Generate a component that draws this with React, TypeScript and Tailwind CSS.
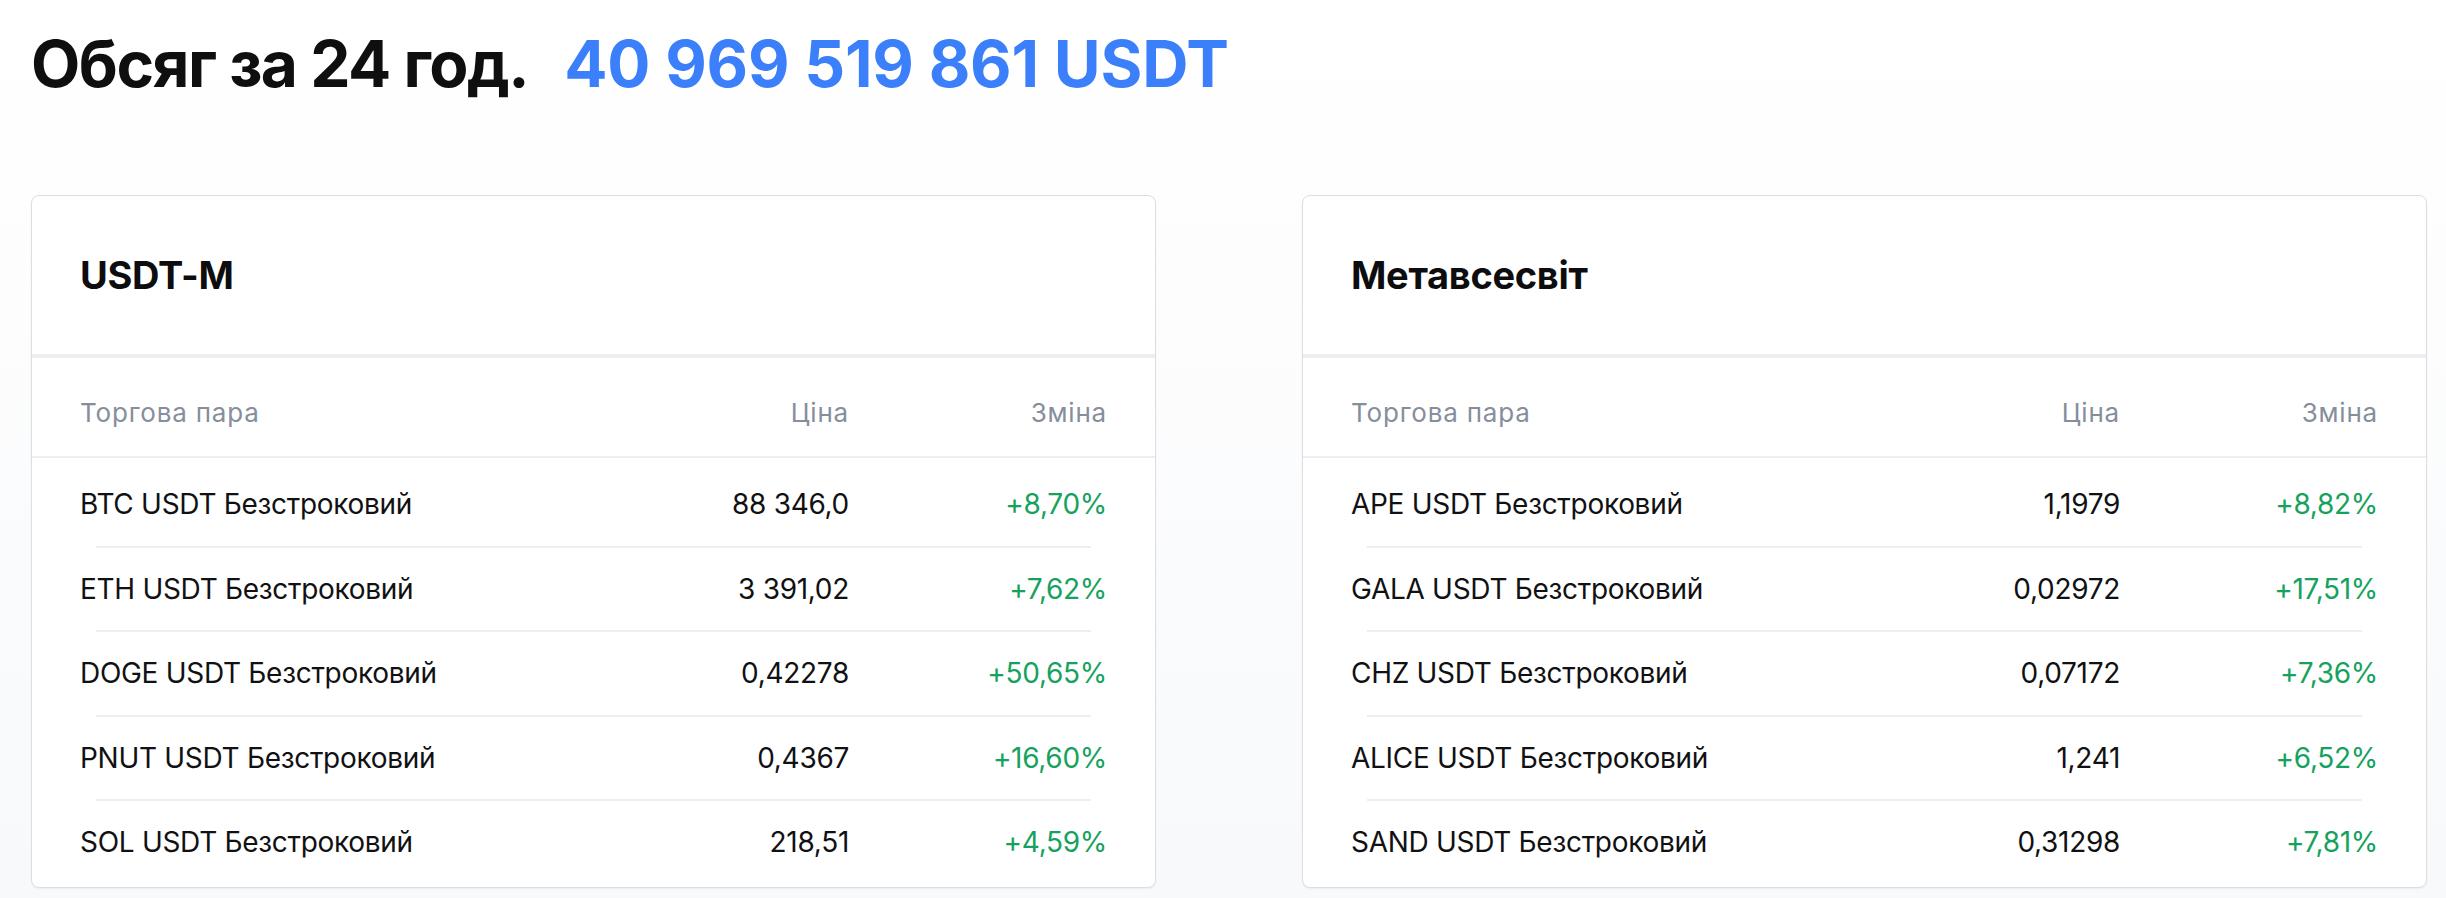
import React from "react";

type Row = { pair: string; price: string; change: string };

const usdtM: Row[] = [
  { pair: "BTC USDT Безстроковий", price: "88 346,0", change: "+8,70%" },
  { pair: "ETH USDT Безстроковий", price: "3 391,02", change: "+7,62%" },
  { pair: "DOGE USDT Безстроковий", price: "0,42278", change: "+50,65%" },
  { pair: "PNUT USDT Безстроковий", price: "0,4367", change: "+16,60%" },
  { pair: "SOL USDT Безстроковий", price: "218,51", change: "+4,59%" },
];

const metaverse: Row[] = [
  { pair: "APE USDT Безстроковий", price: "1,1979", change: "+8,82%" },
  { pair: "GALA USDT Безстроковий", price: "0,02972", change: "+17,51%" },
  { pair: "CHZ USDT Безстроковий", price: "0,07172", change: "+7,36%" },
  { pair: "ALICE USDT Безстроковий", price: "1,241", change: "+6,52%" },
  { pair: "SAND USDT Безстроковий", price: "0,31298", change: "+7,81%" },
];

function MarketCard({ title, rows }: { title: string; rows: Row[] }) {
  return (
    <div className="rounded-lg border border-[#dcdee3] bg-white shadow-[0_1px_2px_rgba(0,0,0,0.05)] overflow-hidden">
      <div className="h-[158px] flex items-center px-12">
        <h2 className="text-[38px] leading-none font-bold text-[#0d0d0f] tracking-[-0.3px]">
          {title}
        </h2>
      </div>
      <div className="h-1 bg-[#eceef1]" />
      <div className="h-[100px] pt-[10px] grid grid-cols-[1fr_200px_258px] items-center px-12 text-[26px] tracking-[0.8px] text-[#868e9c] border-b-2 border-[#eceef1]">
        <span>Торгова пара</span>
        <span className="text-right">Ціна</span>
        <span className="text-right">Зміна</span>
      </div>
      <div className="px-12 pt-[5px] pb-[3px]">
        {rows.map((row, i) => (
          <div key={row.pair}>
            <div className="h-[82.5px] grid grid-cols-[1fr_200px_258px] items-center text-[28px] tracking-[-0.3px] text-[#111113]">
              <span>{row.pair}</span>
              <span className="text-right">{row.price}</span>
              <span className="text-right text-[#16a25e]">{row.change}</span>
            </div>
            {i < rows.length - 1 && <div className="mx-4 h-[2px] bg-[#eeeef2]" />}
          </div>
        ))}
      </div>
    </div>
  );
}

export default function App() {
  return (
    <div
      className="min-h-[898px] bg-linear-to-b from-white to-[#f8f9fb] pl-[31px] pr-[19px] pt-8"
      style={{ fontFamily: "Inter, 'Noto Sans', sans-serif" }}
    >
      <h1 className="flex items-baseline gap-[36px] text-[64px] leading-[64px] font-bold">
        <span className="text-[#0f0f10] tracking-[-1.5px]">Обсяг за 24 год.</span>
        <span className="text-[#3b7ffb] tracking-[-0.2px]">40 969 519 861 USDT</span>
      </h1>
      <div className="mt-[99px] grid grid-cols-2 gap-[146px]">
        <MarketCard title="USDT-M" rows={usdtM} />
        <MarketCard title="Метавсесвіт" rows={metaverse} />
      </div>
    </div>
  );
}
